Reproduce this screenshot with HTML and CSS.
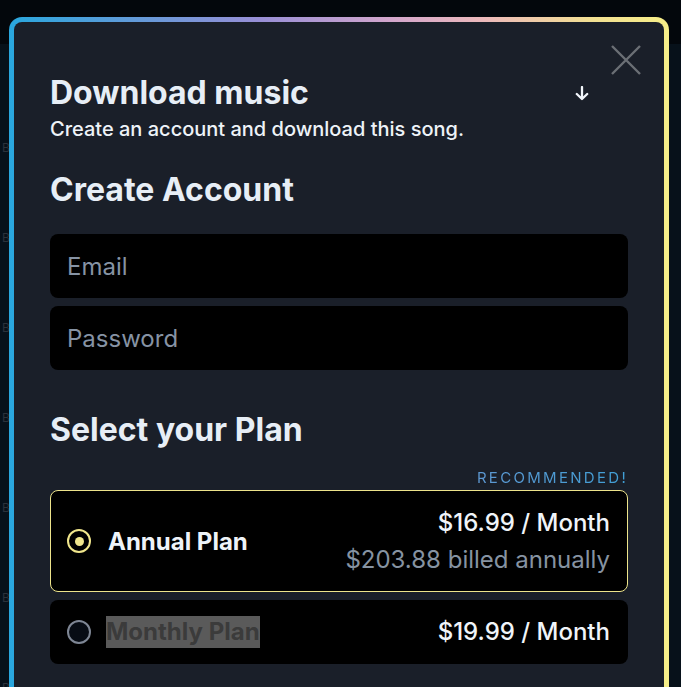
FILE: index.html
```html
<!DOCTYPE html>
<html lang="en">
<head>
    <meta charset="UTF-8">
    <meta name="viewport" content="width=device-width, initial-scale=1.0">
    <title>Download music</title>
    <link rel="stylesheet" href="styles.css">
</head>
<body>
    <header class="topbar"></header>

    <main class="track-list">
        <div class="track">BPM</div>
        <div class="track">BPM</div>
        <div class="track">BPM</div>
        <div class="track">BPM</div>
        <div class="track">BPM</div>
        <div class="track">BPM</div>
        <div class="track">BPM</div>
    </main>

    <div class="modal-frame">
        <div class="modal">
            <button class="close" type="button" aria-label="Close">
                <svg width="30" height="30" viewBox="0 0 30 30">
                    <path d="M1 1 L29 29 M29 1 L1 29" stroke="#6b6f75" stroke-width="2.4" fill="none"/>
                </svg>
            </button>

            <div class="modal-head">
                <h1>Download music</h1>
                <svg class="down-icon" width="14" height="15" viewBox="0 0 14 15">
                    <path d="M7 1 V13 M1.8 8 L7 13 L12.2 8" stroke="#f2f6fb" stroke-width="2.3" fill="none" stroke-linecap="round" stroke-linejoin="round"/>
                </svg>
            </div>
            <p class="subtitle">Create an account and download this song.</p>

            <h2>Create Account</h2>
            <form class="account-form">
                <input type="email" placeholder="Email">
                <input type="password" placeholder="Password">
            </form>

            <h2 class="plan-title">Select your Plan</h2>
            <p class="recommended">RECOMMENDED!</p>

            <div class="plans">
                <label class="plan plan-active">
                    <span class="radio"></span>
                    <span class="plan-name">Annual Plan</span>
                    <span class="plan-price">
                        <span class="price">$16.99 / Month</span>
                        <span class="billed">$203.88 billed annually</span>
                    </span>
                </label>
                <label class="plan plan-small">
                    <span class="radio"></span>
                    <span class="plan-name"><span class="picked">Monthly Plan</span></span>
                    <span class="plan-price">
                        <span class="price">$19.99 / Month</span>
                    </span>
                </label>
            </div>
        </div>
    </div>
</body>
</html>
```

FILE: styles.css
```css
body {
    margin: 0;
    height: 687px;
    overflow: hidden;
    background-color: #03070c;
    font-family: Inter, "Noto Sans", sans-serif;
}
.topbar {
    height: 44px;
    background-color: #03070c;
}
.track-list {
    background-color: #07111a;
    padding-top: 58px;
    height: 700px;
}
.track {
    height: 90px;
    display: flex;
    align-items: center;
    padding-left: 2px;
    color: #2b323b;
    font-size: 12px;
}
.modal-frame {
    position: absolute;
    left: 9px;
    top: 17px;
    width: 660px;
    box-sizing: border-box;
    padding: 5px;
    border-radius: 13px;
    background: linear-gradient(90deg, #29a7de 0%, #5f9bd9 18%, #988fd6 38%, #d3a6cc 58%, #ecb9bb 72%, #f2df93 88%, #f6ee88 100%);
}
.modal {
    position: relative;
    background-color: #1a1f29;
    border-radius: 8px;
    padding: 52px 36px 48px;
}
.close {
    position: absolute;
    top: 23px;
    right: 23px;
    padding: 0;
    border: none;
    background: none;
    cursor: pointer;
    line-height: 0;
}
.modal-head {
    display: flex;
    align-items: center;
}
.down-icon {
    margin-left: auto;
    margin-right: 39px;
    margin-top: 1px;
}
h1 {
    margin: 0;
    font-size: 32px;
    line-height: 38px;
    font-weight: 700;
    color: #e7eef6;
}
.subtitle {
    margin: 5px 0 0;
    font-size: 20px;
    line-height: 24px;
    font-weight: 500;
    color: #eef3f8;
}
h2 {
    margin: 30px 0 0;
    font-size: 32px;
    line-height: 38px;
    font-weight: 700;
    color: #e7eef6;
}
.account-form {
    margin-top: 25px;
    display: flex;
    flex-direction: column;
    gap: 8px;
}
input {
    height: 64px;
    box-sizing: border-box;
    padding: 0 17px;
    border: none;
    border-radius: 8px;
    background-color: #000;
    color: #eef3f8;
    font-family: inherit;
    font-size: 24px;
    outline: none;
}
input::placeholder {
    color: #8693a4;
}
.plan-title {
    margin-top: 41px;
}
.recommended {
    margin: 19px 0 2px;
    text-align: right;
    font-size: 15px;
    line-height: 20px;
    letter-spacing: 2.3px;
    background: linear-gradient(90deg, #8e8ccc, #7892cf 50%, #409fd6);
    -webkit-background-clip: text;
    background-clip: text;
    color: transparent;
}
.plans {
    display: flex;
    flex-direction: column;
    gap: 8px;
}
.plan {
    display: flex;
    align-items: center;
    gap: 17px;
    height: 102px;
    box-sizing: border-box;
    padding: 0 17px 0 16px;
    border: 1px solid transparent;
    border-radius: 8px;
    background-color: #000;
    cursor: pointer;
}
.plan-small {
    height: 64px;
}
.plan-active {
    border-color: #ede48b;
}
.radio {
    width: 24px;
    height: 24px;
    box-sizing: border-box;
    flex-shrink: 0;
    border: 2px solid #7e8694;
    border-radius: 50%;
    background-color: #070c14;
    display: flex;
    align-items: center;
    justify-content: center;
}
.plan-active .radio {
    border-color: #f0e68c;
    background-color: #000;
}
.plan-active .radio::after {
    content: "";
    width: 9px;
    height: 9px;
    border-radius: 50%;
    background-color: #f0e68c;
}
.plan-name {
    font-size: 24px;
    font-weight: 700;
    color: #eef3f8;
}
.picked {
    background-color: #5a5a5a;
    color: #3b3b3b;
    line-height: 32px;
    display: inline-block;
    margin-left: -2px;
}
.plan-price {
    margin-left: auto;
    display: flex;
    flex-direction: column;
    align-items: flex-end;
    gap: 9px;
    font-size: 24px;
    line-height: 28px;
}
.price {
    font-weight: 500;
    color: #f0f4f9;
}
.billed {
    color: #8693a2;
}
```
